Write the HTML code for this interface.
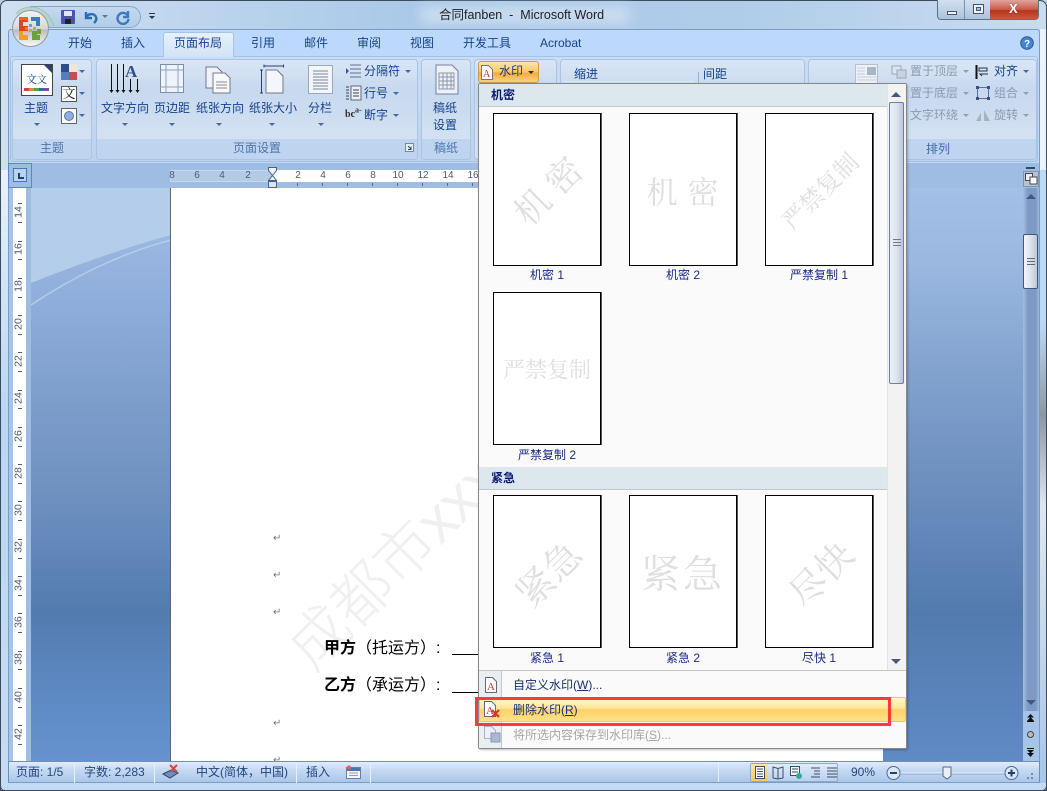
<!DOCTYPE html>
<html lang="zh"><head><meta charset="utf-8"><title>合同fanben - Microsoft Word</title>
<style>
html,body{margin:0;padding:0;width:1047px;height:791px;overflow:hidden;background:#b9d1ea}
*{box-sizing:border-box}
body{position:relative;font:12px "Liberation Sans","Noto Sans CJK SC",sans-serif;color:#15428b}
div,span.t,svg.a{position:absolute}
.t{position:absolute;white-space:nowrap;line-height:16px}
.c{transform:translateX(-50%);text-align:center}
.tab{top:35px;font-size:12px;line-height:16px;color:#15428b;white-space:nowrap}
.grp{top:59px;height:101px;border:1px solid #a9c4e4;border-radius:4px;background:linear-gradient(#dae6f5 0,#c7d9ef 30%,#d3e1f2 80px);overflow:hidden}
.lab{position:absolute;left:0;right:0;bottom:0;height:20px;background:#bfd4ee;text-align:center;line-height:19px;color:#4d76ad;font-size:12px}
.gray{color:#8b9cb1}
.ar{position:absolute;width:0;height:0;border-left:3px solid transparent;border-right:3px solid transparent;border-top:3px solid #456a9f}
.hr{top:170px;font:10px/12px "Liberation Sans",sans-serif;color:#4a5a70;transform:translateX(-50%)}
.tick{position:absolute;top:183px;width:1px;height:3px;background:#5a6a80}
.vr{left:13px;width:13px;height:14px;font:10.5px/13px "Liberation Sans",sans-serif;color:#4a5a70;text-align:center;transform:rotate(-90deg)}
.vt{position:absolute;left:18px;width:4px;height:1px;background:#4a5a70}
.th{position:absolute;width:108px;height:153px;background:#fff;border:1px solid #000;box-shadow:1px 0 0 #555;overflow:hidden}
.wm{position:absolute;left:0;top:0;width:106px;height:151px;text-align:center;white-space:nowrap;color:#dfdfdf;font-family:"Liberation Sans","Noto Serif CJK SC",serif}
.wm span{position:absolute;left:50%;top:50%;transform:translate(-50%,-50%) rotate(-45deg)}
.wm span.h{transform:translate(-50%,-50%)}
.cap{position:absolute;transform:translateX(-50%);white-space:nowrap;color:#1b2a80;line-height:16px;font-size:12px}
.hd{position:absolute;left:1px;width:409px;height:23px;background:#dde7ee;border-bottom:1px solid #c0c8d0;color:#0c1a70;font-weight:bold;padding-left:12px;line-height:22px;font-size:12px}
.ret{position:absolute;left:273px;color:#777;font-size:10px;line-height:12px}
.sb{position:absolute;top:763px;height:20px;line-height:19px;color:#23457c;font-size:12px;white-space:nowrap}
.sep{position:absolute;top:763px;width:1px;height:20px;background:#9fb8d8;border-right:1px solid #e6effa}
</style></head><body>

<!-- title / frame -->
<div style="left:0;top:0;width:1047px;height:791px;background:linear-gradient(90deg,#cfe0f1 0,#a9c8e8 40%,#b0cce9 70%,#c8dcf0 100%);border:1px solid #3c4a5c;border-radius:7px 7px 0 0"></div>
<div style="left:1px;top:170px;width:7px;height:613px;background:linear-gradient(#e8f2fb,#b9d6f3 40%,#c6dcf2)"></div>
<div style="left:1040px;top:170px;width:6px;height:613px;background:linear-gradient(#bcd9f6 0,#bcd9f6 25%,#8d97a3 40%,#dfe7f0 55%,#a8c6e8 100%)"></div>
<div style="left:1040px;top:29px;width:6px;height:141px;background:#eaf3fb"></div>
<div style="left:420px;top:6px;width:210px;height:18px;background:#c9dcf0;filter:blur(6px)"></div>
<div class="t" style="left:439px;top:7px;color:#1e1e1e;font-size:12.5px">合同fanben&nbsp; -&nbsp; Microsoft Word</div>

<!-- QAT -->
<div style="left:30px;top:6px;width:111px;height:22px;background:linear-gradient(#c4d9ef,#b2cde9);border:1px solid #8aa5c6;border-radius:0 11px 11px 0"></div>
<svg class="a" style="left:60px;top:9px" width="16" height="16"><rect x="1" y="1" width="14" height="14" rx="1" fill="#4b55a8"/><rect x="4" y="2" width="8" height="5" fill="#dfe6f5"/><rect x="5" y="10" width="6" height="5" fill="#222"/></svg>
<svg class="a" style="left:83px;top:9px" width="16" height="16"><path d="M3 3v6h6M3 9C5 4 11 4 13 8c1 2 0 4-2 6" fill="none" stroke="#2c6db6" stroke-width="2.4"/></svg>
<div class="ar" style="left:102px;top:15px;border-top-color:#5f7795"></div>
<svg class="a" style="left:115px;top:9px" width="16" height="16"><path d="M13 2v6H8M13 7A5.5 5.5 0 1 0 13.5 10" fill="none" stroke="#3d7ac0" stroke-width="2.4"/></svg>
<div style="left:149px;top:13px;width:6px;height:1px;background:#26394f"></div>
<div class="ar" style="left:149px;top:16px;border-top-color:#26394f"></div>

<!-- window buttons -->
<div style="left:937px;top:0;width:102px;height:20px;border:1px solid #5f6f82;border-top:none;border-radius:0 0 4px 4px;background:linear-gradient(#d2e0ef,#aac3df);overflow:hidden">
 <div style="left:26px;top:0;width:1px;height:19px;background:#7d8fa5"></div>
 <div style="left:52px;top:0;width:49px;height:19px;background:linear-gradient(#e0a49a,#c95b49 50%,#b8321e 55%,#c85a3e)"></div>
 <div style="left:9px;top:11px;width:10px;height:4px;background:#eef3f8;border:1px solid #45566c"></div>
 <div style="left:35px;top:4px;width:11px;height:10px;background:#eef3f8;border:1px solid #45566c"></div>
 <div style="left:38px;top:7px;width:5px;height:4px;background:#a9c2dd;border:1px solid #45566c"></div>
 <div class="t" style="left:71px;top:1px;color:#fff;font:bold 13px/16px 'Liberation Sans',sans-serif;text-shadow:0 0 1px #444">X</div>
</div>

<!-- ribbon -->
<div style="left:8px;top:29px;width:1032px;height:135px;background:#bcd8fb;border:1px solid #7e9cc0;border-bottom:none;border-radius:3px 3px 0 0"></div>
<div style="left:10px;top:56px;width:1028px;height:106px;background:linear-gradient(#c9dcf5,#bdd2ec);border:1px solid #a5c1e4;border-radius:3px"></div>

<!-- office orb -->
<svg class="a" style="left:6px;top:2px" width="54" height="50">
 <defs><linearGradient id="orb" x1="0" y1="0" x2="0" y2="1"><stop offset="0" stop-color="#f4f4f2"/><stop offset=".5" stop-color="#d8d8d4"/><stop offset=".55" stop-color="#bdbdb8"/><stop offset="1" stop-color="#fafaf8"/></linearGradient></defs>
 <path d="M10 12 C16 2 40 0 48 24" fill="#b7d4c4" stroke="#9cbcae" opacity=".8"/>
 <circle cx="24.500" cy="26.500" r="18" fill="url(#orb)" stroke="#8f9aa8"/>
 <path d="M13 15h9v5h-5v4h5v5h-9z" fill="#d9481f"/>
 <path d="M13 15h9v3h-9z" fill="#e9691a"/>
 <path d="M25 15h9v9h-4v-5h-5z" fill="#3a7dbd"/>
 <path d="M13 29h4v4h5v5h-9z" fill="#f0a11c"/>
 <path d="M26 29h5v4h3v5h-8z" fill="#6aa436"/>
 <path d="M31 27h4v5h-4z" fill="#6aa436"/>
 <g fill="#6d9fd0"><rect x="23" y="22" width="3" height="3"/><rect x="23" y="27" width="3" height="3" fill="#e0a030"/><rect x="27" y="25" width="3" height="3" fill="#9dbb5a"/><rect x="19" y="25" width="3" height="3" fill="#e67a2d"/></g>
</svg>

<div style="left:163px;top:32px;width:71px;height:25px;background:linear-gradient(#e7f0fb,#d3e3f5);border:1px solid #a5c4e6;border-bottom:none;border-radius:3px 3px 0 0"></div>
<span class="t tab" style="left:68px">开始</span>
<span class="t tab" style="left:121px">插入</span>
<span class="t tab" style="left:174px">页面布局</span>
<span class="t tab" style="left:251px">引用</span>
<span class="t tab" style="left:304px">邮件</span>
<span class="t tab" style="left:357px">审阅</span>
<span class="t tab" style="left:410px">视图</span>
<span class="t tab" style="left:463px">开发工具</span>
<span class="t tab" style="left:540px">Acrobat</span>
<svg class="a" style="left:1020px;top:36px" width="14" height="14"><circle cx="7" cy="7" r="6.3" fill="#3f86d3" stroke="#2b5a95"/><text x="7" y="11" font-size="10" font-weight="bold" fill="#fff" text-anchor="middle" font-family="Liberation Sans">?</text></svg>

<div class="grp" style="left:12px;width:80px"><div class="lab">主题</div></div>
<div class="grp" style="left:96px;width:322px"><div class="lab">页面设置</div></div>
<div class="grp" style="left:421px;width:50px"><div class="lab">稿纸</div></div>
<div class="grp" style="left:474px;width:83px"></div>
<div class="grp" style="left:560px;width:245px"></div>
<div class="grp" style="left:808px;width:229px"><div class="lab">&nbsp;</div></div>
<span class="t" style="left:926px;top:141px;color:#3f69a8">排列</span>

<!-- theme group -->
<div style="left:21px;top:64px;width:32px;height:32px;background:#fff;border:1px solid #444"></div>
<div class="t" style="left:26px;top:72px;color:#15428b;font-size:11px;font-family:'Liberation Serif','Noto Serif CJK SC',serif">文<span style="font-size:10px">文</span></div>
<div style="left:24px;top:88px;width:25px;height:3px;background:linear-gradient(90deg,#c44 0 20%,#d83 20% 40%,#4a4 40% 60%,#36a 60% 80%,#84a 80%)"></div>
<div style="left:44px;top:65px;width:0;height:0;border-top:8px solid #2b3f7a;border-left:8px solid transparent"></div>
<span class="t c" style="left:36px;top:100px">主题</span><div class="ar" style="left:34px;top:123px"></div>
<svg class="a" style="left:61px;top:64px" width="16" height="16"><rect width="8" height="8" fill="#2a4f85"/><rect x="8" width="8" height="8" fill="#ece7d6"/><rect y="8" width="8" height="8" fill="#5280ba"/><rect x="8" y="8" width="8" height="8" fill="#c0504d"/></svg><div class="ar" style="left:79px;top:70px"></div>
<div style="left:61px;top:86px;width:16px;height:16px;background:#fff;border:1px solid #555;font:13px/14px 'Liberation Serif','Noto Serif CJK SC',serif;color:#111;text-align:center">文</div><div class="ar" style="left:79px;top:92px"></div>
<div style="left:61px;top:108px;width:16px;height:16px;background:#fff;border:1px solid #666"></div><div style="left:64px;top:111px;width:10px;height:10px;border-radius:50%;background:#8fb0e0;border:1px solid #5878aa"></div><div class="ar" style="left:79px;top:114px"></div>

<!-- page setup -->
<svg class="a" style="left:108px;top:62px" width="34" height="32"><path d="M3.500 2v27M9.500 2v27M15.500 2v27M22.500 17v12M29.500 17v12" stroke="#111" fill="none"/><path d="M1.500 28h4l-2 3zM7.500 28h4l-2 3zM13.500 28h4l-2 3zM20.500 28h4l-2 3zM27.500 28h4l-2 3z" fill="#111"/><text x="17" y="15" font-size="17" font-weight="bold" fill="#2f4e8e" font-family="Liberation Serif">A</text></svg>
<span class="t c" style="left:125px;top:100px">文字方向</span><div class="ar" style="left:122px;top:123px"></div>
<svg class="a" style="left:160px;top:64px" width="26" height="30"><rect x=".5" y=".5" width="23" height="28" fill="#eef3fb" stroke="#7d8ea5"/><path d="M6 1v27M18 1v27M1 6h22M1 23h22" stroke="#8fa0b8"/></svg>
<span class="t c" style="left:172px;top:100px">页边距</span><div class="ar" style="left:169px;top:123px"></div>
<svg class="a" style="left:205px;top:66px" width="30" height="28"><path d="M1 1h11l5 5v16H1z" fill="#eef3fb" stroke="#778"/><path d="M8 7h12l5 5v15H8z" fill="#f8f8f8" stroke="#778"/><path d="M11 16h11M11 19h11M11 22h11" stroke="#889"/></svg>
<span class="t c" style="left:220px;top:100px">纸张方向</span><div class="ar" style="left:216px;top:123px"></div>
<svg class="a" style="left:259px;top:64px" width="28" height="30"><path d="M5 2h20M5 .5v3M24.500 .5v3M2.500 6v23M1 6h3M1 29h3" stroke="#2a3f6a" fill="none"/><path d="M7 6h11l6 6v17H7z" fill="#f3f6fb" stroke="#778"/></svg>
<span class="t c" style="left:273px;top:100px">纸张大小</span><div class="ar" style="left:269px;top:123px"></div>
<svg class="a" style="left:308px;top:65px" width="26" height="29"><rect x=".5" y=".5" width="24" height="28" fill="#f2f5fa" stroke="#99a8bb"/><path d="M5 6h15M5 9h15M5 12h15M5 15h15M5 18h15M5 21h15M5 24h15" stroke="#7a8698"/></svg>
<span class="t c" style="left:320px;top:100px">分栏</span><div class="ar" style="left:318px;top:123px"></div>
<svg class="a" style="left:345px;top:63px" width="17" height="16"><path d="M5 2h11M5 6h11M5 10h11M5 14h11" stroke="#5c6f8f"/><path d="M1 5l3 3-3 3z" fill="#2b59a8"/></svg>
<span class="t" style="left:364px;top:63px">分隔符</span><div class="ar" style="left:405px;top:70px"></div>
<svg class="a" style="left:345px;top:85px" width="17" height="16"><rect x="6" y="1" width="10" height="14" fill="#eef" stroke="#667"/><path d="M1 2h3M1 5h3M1 8h3M1 11h3M1 14h3M8 5h6M8 8h6M8 11h6" stroke="#345"/></svg>
<span class="t" style="left:364px;top:85px">行号</span><div class="ar" style="left:393px;top:92px"></div>
<span class="t" style="left:345px;top:107px;font:bold 10px/16px 'Liberation Serif',serif;color:#333">b<span style="color:#222">c</span><sup style="font-size:8px;line-height:0">a-</sup></span>
<span class="t" style="left:364px;top:107px">断字</span><div class="ar" style="left:393px;top:114px"></div>
<svg class="a" style="left:405px;top:143px" width="9" height="9"><rect x=".5" y=".5" width="8" height="8" fill="#e8f0fa" stroke="#789"/><path d="M3 3l3 3M6 3.500v3H3" stroke="#345" fill="none"/></svg>

<!-- gaozhi -->
<svg class="a" style="left:435px;top:64px" width="24" height="31"><path d="M1 1h16l6 6v23H1z" fill="#eef2f8" stroke="#6d83a8"/><path d="M4 9h15v16H4zM4 13h15M4 17h15M4 21h15M8 9v16M12 9v16M16 9v16" stroke="#8a95a6" fill="none"/></svg>
<span class="t c" style="left:445px;top:100px">稿纸</span><span class="t c" style="left:445px;top:117px">设置</span>

<!-- watermark button -->
<div style="left:478px;top:61px;width:61px;height:22px;background:linear-gradient(#fde6b0,#fbc765 50%,#f9a93a 55%,#fcd27f);border:1px solid #c99a53;border-radius:3px"></div>
<svg class="a" style="left:481px;top:65px" width="12" height="15"><path d="M.5.5h7l4 4v10H.5z" fill="#fff" stroke="#777"/><text x="2" y="12" font-size="10" fill="#c33" font-family="Liberation Serif">A</text></svg>
<span class="t" style="left:499px;top:63px;color:#1b3a78">水印</span><div class="ar" style="left:528px;top:71px;border-top-color:#234"></div>

<!-- paragraph group heads -->
<span class="t" style="left:574px;top:66px">缩进</span><span class="t" style="left:703px;top:66px">间距</span>
<div style="left:698px;top:72px;width:1px;height:12px;background:#9db5d5"></div>
<div style="left:564px;top:81px;width:130px;height:1px;background:#dfe9f6"></div>

<!-- arrange group -->
<svg class="a" style="left:855px;top:64px" width="24" height="20"><rect x=".5" y=".5" width="22" height="19" fill="#eef2f7" stroke="#b4c0cf"/><path d="M2 4h8M2 7h8M2 10h8M2 13h20M2 16h20" stroke="#c5cfdb"/><rect x="12" y="3" width="9" height="8" fill="#a9b6c6"/></svg>
<svg class="a" style="left:891px;top:65px" width="17" height="14"><rect x="1" y="1" width="9" height="8" fill="#dfe5ee" stroke="#98a7ba"/><rect x="6" y="5" width="9" height="8" fill="#c9d3e0" stroke="#98a7ba"/></svg>
<span class="t gray" style="left:910px;top:63px">置于顶层</span><div class="ar" style="left:963px;top:70px;border-top-color:#8ea0b5"></div>
<span class="t gray" style="left:910px;top:85px">置于底层</span><div class="ar" style="left:963px;top:92px;border-top-color:#8ea0b5"></div>
<span class="t gray" style="left:910px;top:107px">文字环绕</span><div class="ar" style="left:963px;top:114px;border-top-color:#8ea0b5"></div>
<svg class="a" style="left:975px;top:64px" width="15" height="16"><path d="M1.500 1v14" stroke="#111" stroke-width="2"/><path d="M4 4h8v3H4zM13 10H5l2 2" fill="none" stroke="#234"/></svg>
<span class="t" style="left:994px;top:63px">对齐</span><div class="ar" style="left:1023px;top:70px"></div>
<svg class="a" style="left:975px;top:85px" width="16" height="16"><rect x="2.500" y="2.500" width="11" height="11" fill="none" stroke="#5b7196"/><path d="M1 1h3v3H1zM12 1h3v3h-3zM1 12h3v3H1zM12 12h3v3h-3z" fill="#36527f"/></svg>
<span class="t gray" style="left:994px;top:85px">组合</span><div class="ar" style="left:1023px;top:92px;border-top-color:#8ea0b5"></div>
<svg class="a" style="left:975px;top:108px" width="16" height="14"><path d="M1 13l5-8v8zM9 13V2l6 11z" fill="#a5b2c2"/></svg>
<span class="t gray" style="left:994px;top:107px">旋转</span><div class="ar" style="left:1023px;top:114px;border-top-color:#8ea0b5"></div>

<!-- workspace -->
<div style="left:8px;top:163px;width:1032px;height:599px;background:#9fbde2;border-left:1px solid #7e9cc0;border-right:1px solid #7e9cc0"></div>
<div style="left:31px;top:188px;width:140px;height:574px;background:linear-gradient(#a2bfe4 0,#90aedb 110px,#7f9fcc 200px,#6f92c2 300px,#537bae 425px,#5f8bc6 520px,#6792cf 574px)"></div>
<svg class="a" style="left:31px;top:188px" width="140" height="120"><path d="M0 95 C50 75 100 58 140 47 V0 H0z" fill="#b3cdeb"/><path d="M0 117 C40 90 90 65 140 52" fill="none" stroke="#b5cde9" stroke-width="1.500"/></svg>
<div style="left:883px;top:188px;width:140px;height:574px;background:linear-gradient(#a2c0e6 0,#9dbbe2 60px,#7f9fcc 200px,#6d90c0 290px,#537bae 425px,#5f8ac4 574px)"></div>
<div style="left:170px;top:188px;width:1px;height:574px;background:#666"></div>
<div style="left:171px;top:188px;width:712px;height:574px;background:#fff;overflow:hidden">
 <div class="t" style="left:128px;top:436px;font:60px/70px 'Liberation Sans','Noto Sans CJK SC',sans-serif;font-weight:300;color:#f0f0f0;transform:rotate(-45deg);transform-origin:0 50%">成都市xxxxxx</div>
 <div class="t" style="left:153px;top:451px;font-size:16px;line-height:20px;color:#000"><b>甲方</b>（托运方）:</div>
 <div class="t" style="left:153px;top:488px;font-size:16px;line-height:20px;color:#000"><b>乙方</b>（承运方）:</div>
 <div style="left:281px;top:466px;width:40px;height:1px;background:#000"></div>
 <div style="left:281px;top:504px;width:40px;height:1px;background:#000"></div>
</div>
<div class="ret" style="top:533px">↵</div><div class="ret" style="top:570px">↵</div><div class="ret" style="top:607px">↵</div><div class="ret" style="top:718px">↵</div><div class="ret" style="top:755px">↵</div>

<!-- h ruler -->
<div style="left:9px;top:165px;width:1030px;height:23px;background:#9fbde2"></div>
<div style="left:8px;top:163px;width:24px;height:25px;border:1px solid #5b86cc"></div>
<div style="left:13px;top:168px;width:14px;height:14px;background:#bcd3ee;border:1px solid #4a78c0"></div>
<div style="left:18px;top:173px;width:2px;height:6px;background:#1f3d70"></div><div style="left:18px;top:177px;width:6px;height:2px;background:#1f3d70"></div>
<div style="left:170px;top:170px;width:102px;height:12px;background:#b4cbe6;border:1px solid #c8d9ec"></div>
<div style="left:272px;top:170px;width:208px;height:12px;background:#fff"></div>
<div class="hr" style="left:172px">8</div><div class="hr" style="left:197px">6</div><div class="hr" style="left:222px">4</div><div class="hr" style="left:248px">2</div>
<div class="hr" style="left:298px">2</div><div class="hr" style="left:323px">4</div><div class="hr" style="left:348px">6</div><div class="hr" style="left:373px">8</div><div class="hr" style="left:398px">10</div><div class="hr" style="left:423px">12</div><div class="hr" style="left:448px">14</div><div class="hr" style="left:473px">16</div>
<div class="tick" style="left:297px"></div><div class="tick" style="left:322px"></div><div class="tick" style="left:347px"></div><div class="tick" style="left:372px"></div><div class="tick" style="left:397px"></div><div class="tick" style="left:422px"></div><div class="tick" style="left:447px"></div><div class="tick" style="left:472px"></div>
<svg class="a" style="left:268px;top:167px" width="10" height="21"><path d="M.5.5h8v3L4.500 8.500.5 3.500z" fill="#eef3fa" stroke="#44618f"/><path d="M4.500 8.500l4 5H.5z" fill="#eef3fa" stroke="#44618f"/><rect x=".5" y="14.500" width="8" height="6" fill="#dbe5f2" stroke="#44618f"/></svg>

<!-- v ruler -->
<div style="left:13px;top:188px;width:13px;height:574px;background:#fff"></div>
<div style="left:9px;top:188px;width:4px;height:574px;background:#a6c3e8"></div>
<div style="left:26px;top:188px;width:5px;height:574px;background:#9fbde2"></div>
<div class="vr" style="top:205px">14</div><div class="vr" style="top:242px">16</div><div class="vr" style="top:279px">18</div><div class="vr" style="top:317px">20</div><div class="vr" style="top:354px">22</div><div class="vr" style="top:391px">24</div><div class="vr" style="top:429px">26</div><div class="vr" style="top:466px">28</div><div class="vr" style="top:503px">30</div><div class="vr" style="top:540px">32</div><div class="vr" style="top:578px">34</div><div class="vr" style="top:615px">36</div><div class="vr" style="top:652px">38</div><div class="vr" style="top:690px">40</div><div class="vr" style="top:727px">42</div>
<div class="vt" style="top:203px"></div><div class="vt" style="top:222px"></div><div class="vt" style="top:241px"></div><div class="vt" style="top:259px"></div><div class="vt" style="top:278px"></div><div class="vt" style="top:297px"></div><div class="vt" style="top:315px"></div><div class="vt" style="top:334px"></div><div class="vt" style="top:352px"></div><div class="vt" style="top:371px"></div><div class="vt" style="top:390px"></div><div class="vt" style="top:408px"></div><div class="vt" style="top:427px"></div><div class="vt" style="top:446px"></div><div class="vt" style="top:464px"></div><div class="vt" style="top:483px"></div><div class="vt" style="top:501px"></div><div class="vt" style="top:520px"></div><div class="vt" style="top:539px"></div><div class="vt" style="top:558px"></div><div class="vt" style="top:576px"></div><div class="vt" style="top:595px"></div><div class="vt" style="top:613px"></div><div class="vt" style="top:632px"></div><div class="vt" style="top:651px"></div><div class="vt" style="top:669px"></div><div class="vt" style="top:688px"></div><div class="vt" style="top:707px"></div><div class="vt" style="top:725px"></div><div class="vt" style="top:744px"></div>

<!-- scrollbar -->
<div style="left:1023px;top:188px;width:16px;height:574px;background:linear-gradient(90deg,#a3bee0,#7e9ac4 30%,#7e9ac4 80%,#9db8da)"></div>
<div style="left:1023px;top:711px;width:16px;height:51px;background:#a6c3ea"></div>
<div style="left:1023px;top:165px;width:16px;height:23px;background:#9fbde2"></div>
<div style="left:1026px;top:167px;width:9px;height:2px;background:#33496b"></div>
<div style="left:1023px;top:171px;width:16px;height:16px;background:#b5c3d4;border:1px solid #8094ad"></div>
<svg class="a" style="left:1025px;top:173px" width="13" height="12"><rect x=".5" y=".5" width="7" height="7" fill="#eef" stroke="#445"/><rect x="5" y="4" width="7" height="7" fill="#fff" stroke="#445"/></svg>
<div style="left:1026px;top:194px;width:0;height:0;border-left:5px solid transparent;border-right:5px solid transparent;border-bottom:5px solid #44587e"></div>
<div style="left:1023px;top:234px;width:15px;height:55px;background:linear-gradient(90deg,#f4f6f9,#dde3ec 50%,#bcc8d8);border:1px solid #3e5885;border-radius:2px"></div>
<div style="left:1027px;top:258px;width:8px;height:7px;border-top:1px solid #667;border-bottom:1px solid #667"></div><div style="left:1027px;top:261px;width:8px;height:1px;background:#667"></div>
<div style="left:1026px;top:700px;width:0;height:0;border-left:5px solid transparent;border-right:5px solid transparent;border-top:5px solid #44587e"></div>
<svg class="a" style="left:1025px;top:714px" width="11" height="44"><path d="M5.500 0L9 3.500H2zM5.500 3L9 7H2z" fill="#111"/><rect x="2" y="7" width="7" height="1" fill="#111"/><circle cx="5.500" cy="20.500" r="3" fill="#bbb" stroke="#444"/><rect x="2" y="34" width="7" height="1" fill="#111"/><path d="M2 36h7l-3.500 3.500zM2 39h7l-3.500 4z" fill="#111"/></svg>

<!-- status bar -->
<div style="left:8px;top:761px;width:1032px;height:22px;background:linear-gradient(#e0ecfb 0,#c5d9f3 40%,#aac6ea);border:1px solid #6f8eb8;border-bottom:1px solid #7e9cc0"></div>
<div style="left:0;top:783px;width:1047px;height:8px;background:#c2daf3;border-left:1px solid #3c4a5c;border-right:1px solid #3c4a5c;border-bottom:1px solid #3c4a5c;border-radius:0 0 5px 5px"></div>
<span class="sb" style="left:16px">页面: 1/5</span><div class="sep" style="left:74px"></div>
<span class="sb" style="left:84px">字数: 2,283</span><div class="sep" style="left:154px"></div>
<svg class="a" style="left:162px;top:764px" width="18" height="16"><path d="M1 10l8-4 7 3-8 5z" fill="#6a8fc8" stroke="#345"/><path d="M8 1l7 7M15 1L8 8" stroke="#d43" stroke-width="2"/></svg>
<span class="sb" style="left:196px">中文(简体，中国)</span><div class="sep" style="left:296px"></div>
<span class="sb" style="left:306px">插入</span>
<svg class="a" style="left:346px;top:765px" width="15" height="14"><rect x=".5" y="2.500" width="14" height="11" fill="#f2f5fb" stroke="#6a7f9f"/><rect x="1" y="3" width="13" height="3" fill="#4a73b2"/><path d="M3 8h9M3 10.500h9" stroke="#99a"/><circle cx="3" cy="2.500" r="2" fill="#d64"/></svg>
<div class="sep" style="left:370px"></div>
<div class="sep" style="left:718px;top:762px"></div>
<div style="left:750px;top:763px;width:88px;height:19px;background:linear-gradient(#e0ecfb,#b9d0ee);border:1px solid #8ea9cc;border-radius:2px"></div>
<div style="left:751px;top:764px;width:17px;height:17px;background:linear-gradient(#fde6a8,#fbc762)"></div>
<svg class="a" style="left:754px;top:765px" width="84" height="15"><g fill="none" stroke="#3c4d66"><rect x="1.500" y="1.500" width="9" height="12" fill="#fff"/><path d="M3 4h6M3 6.500h6M3 9h6M3 11.500h6"/><path d="M19 2l5 1.500 5-1.500v11l-5 1-5-1zM24 3.500v10"/><rect x="36.500" y="1.500" width="9" height="9" fill="#f4f7fb"/><path d="M38 4h6M38 7h6"/><path d="M57 3h9M60 6h6M60 9h6M57 12h9"/><path d="M73 3h10M73 6h10M73 9h10M73 12h10"/></g><circle cx="45" cy="11" r="3" fill="#3a9" /></svg>
<span class="sb" style="left:851px">90%</span>
<svg class="a" style="left:885px;top:763px" width="150" height="20"><circle cx="8.500" cy="10" r="6.500" fill="#dce7f5" stroke="#516b96"/><path d="M5 10h7" stroke="#24406e" stroke-width="2"/><path d="M16 10h104" stroke="#f2f6fc"/><path d="M16 11h104" stroke="#8ea9cc"/><path d="M58 4h8v9l-4 3-4-3z" fill="#e8eef6" stroke="#516b96"/><circle cx="126.500" cy="10" r="6.500" fill="#dce7f5" stroke="#516b96"/><path d="M123 10h7M126.500 6.500v7" stroke="#24406e" stroke-width="2"/><g fill="#6f8db8"><rect x="146" y="14" width="2" height="2"/><rect x="142" y="14" width="2" height="2"/><rect x="146" y="10" width="2" height="2"/></g></svg>

<!-- watermark menu -->
<div style="left:478px;top:83px;width:429px;height:666px;background:#fafafa;border:1px solid #868686;box-shadow:1px 1px 2px rgba(0,0,0,.25);border-radius:2px"></div>
<div class="hd" style="left:479px;top:84px;width:408px">机密</div>
<div class="hd" style="left:479px;top:467px;width:408px">紧急</div>

<div class="th" style="left:493px;top:113px"><div class="wm" style="font-size:35px;"><span style="font-family:'Noto Serif CJK SC',serif">机 密</span></div></div>
<div class="th" style="left:629px;top:113px"><div class="wm" style="font-size:31px;"><span class="h" style="font-family:'Noto Serif CJK SC',serif;letter-spacing:1px">机 密</span></div></div>
<div class="th" style="left:765px;top:113px"><div class="wm" style="font-size:24px;"><span style="font-family:'Noto Serif CJK SC',serif">严禁复制</span></div></div>
<div class="th" style="left:493px;top:292px"><div class="wm" style="font-size:22px;"><span class="h" style="font-family:'Noto Serif CJK SC',serif">严禁复制</span></div></div>
<div class="th" style="left:493px;top:495px"><div class="wm" style="font-size:37px;"><span>紧急</span></div></div>
<div class="th" style="left:629px;top:495px"><div class="wm" style="font-size:39px;"><span class="h" style="letter-spacing:3px">紧急</span></div></div>
<div class="th" style="left:765px;top:495px"><div class="wm" style="font-size:37px;"><span>尽快</span></div></div>

<span class="cap" style="left:547px;top:267px">机密 1</span>
<span class="cap" style="left:683px;top:267px">机密 2</span>
<span class="cap" style="left:819px;top:267px">严禁复制 1</span>
<span class="cap" style="left:547px;top:447px">严禁复制 2</span>
<span class="cap" style="left:547px;top:650px">紧急 1</span>
<span class="cap" style="left:683px;top:650px">紧急 2</span>
<span class="cap" style="left:819px;top:650px">尽快 1</span>

<!-- gallery scrollbar -->
<div style="left:887px;top:84px;width:19px;height:586px;background:#f2f2f2;border-left:1px solid #e3e3e3"></div>
<div style="left:891px;top:92px;width:0;height:0;border-left:5px solid transparent;border-right:5px solid transparent;border-bottom:5px solid #44587e"></div>
<div style="left:889px;top:102px;width:15px;height:282px;background:linear-gradient(90deg,#eaeef4,#dfe5ee 50%,#b9c5d8);border:1px solid #6b7f9f;border-radius:2px"></div>
<div style="left:893px;top:239px;width:8px;height:7px;border-top:1px solid #778;border-bottom:1px solid #778"></div><div style="left:893px;top:242px;width:8px;height:1px;background:#778"></div>
<div style="left:891px;top:659px;width:0;height:0;border-left:5px solid transparent;border-right:5px solid transparent;border-top:5px solid #44587e"></div>

<!-- menu footer -->
<div style="left:479px;top:670px;width:427px;height:78px;background:#fafafa;border-top:1px solid #c5c5c5"></div>
<div style="left:479px;top:671px;width:23px;height:77px;background:#e9eef0;border-right:1px solid #c5c5c5"></div>
<svg class="a" style="left:484px;top:677px" width="14" height="16"><path d="M1.500.5h7l4 4v11h-11z" fill="#fff" stroke="#667"/><text x="3" y="13" font-size="11" fill="#c33" font-family="Liberation Serif">A</text></svg>
<span class="t" style="left:513px;top:677px;color:#16306e">自定义水印(<u>W</u>)...</span>
<div style="left:479px;top:697px;width:427px;height:25px;background:linear-gradient(#fff7cf,#ffe59a 45%,#ffd265 50%,#ffe08a);border:1px solid #e4c97c;border-radius:2px"></div>
<svg class="a" style="left:483px;top:701px" width="18" height="17"><path d="M1.500.5h7l4 4v11h-11z" fill="#fff" stroke="#667"/><text x="3" y="13" font-size="11" fill="#c33" font-family="Liberation Serif">A</text><path d="M9 9l7 7M16 9l-7 7" stroke="#e03020" stroke-width="2"/></svg>
<span class="t" style="left:513px;top:702px;color:#16306e">删除水印(<u>R</u>)</span>
<svg class="a" style="left:483px;top:726px" width="18" height="17"><path d="M1.500.5h7l4 4v8h-11z" fill="#eef" stroke="#a9b4c2"/><rect x="8" y="7" width="9" height="9" fill="#a7bad2" stroke="#8a9bb2"/></svg>
<span class="t" style="left:513px;top:727px;color:#a7a7a7">将所选内容保存到水印库(<u>S</u>)...</span>

<!-- red highlight -->
<div style="left:475px;top:697px;width:416px;height:29px;border:3px solid #f73a3c"></div>
</body></html>
